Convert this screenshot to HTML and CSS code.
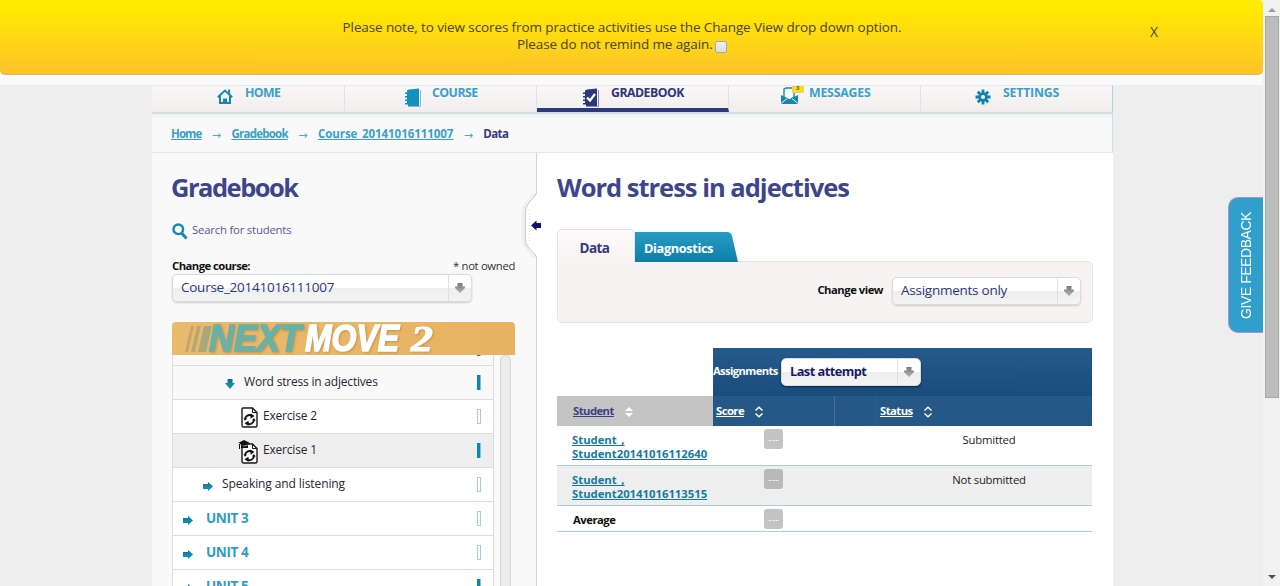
FILE: index.html
```html
<!DOCTYPE html>
<html lang="en">
<head>
<meta charset="utf-8">
<title>Gradebook</title>
<link rel="stylesheet" href="styles.css">
</head>
<body>
<svg class="defs" width="0" height="0">
  <defs>
    <linearGradient id="teal" x1="0" y1="0" x2="0" y2="1"><stop offset="0" stop-color="#116c8c"/><stop offset=".5" stop-color="#1289b4"/><stop offset="1" stop-color="#1492c0"/></linearGradient>
    <linearGradient id="grey" x1="0" y1="0" x2="0" y2="1"><stop offset="0" stop-color="#777"/><stop offset="1" stop-color="#b4b4b4"/></linearGradient>
    <symbol id="right" viewBox="0 0 10 9"><path fill="url(#teal)" d="M0 2h5V0l5 4.500L5 9V7H0z"/></symbol>
    <symbol id="down" viewBox="0 0 10 10"><path fill="url(#teal)" d="M2.500 0h5v4H10L5 10 0 4h2.500z"/></symbol>
    <symbol id="drop" viewBox="0 0 10 10"><path fill="url(#grey)" d="M2.500 0h5v3.500H10v1.500L5 10 0 5V3.500h2.500z"/></symbol>
    <symbol id="sheet" viewBox="0 0 17 21">
      <path d="M2 1h9.500l4.500 4.500V18.500a1.500 1.500 0 0 1-1.500 1.500H2.500A1.500 1.500 0 0 1 1 18.500V2a1 1 0 0 1 1-1z" fill="#fff" stroke="#1a1a1a" stroke-width="1.400"/>
      <path d="M11.500 1v4.500H16" fill="none" stroke="#1a1a1a"/>
      <path d="M4 12A4.500 4.500 0 0 1 10.500 8.600M13 12.800A4.500 4.500 0 0 1 6.500 16.700" fill="none" stroke="#111" stroke-width="1.900"/>
      <path d="M9.500 6.500l4 2.500-4 2.700zM7.500 13.700l-4 2.500 4 2.700zM2.300 11.500h3.800l-2 2.300zM10.900 13.500h3.900l-2-2.500z" fill="#111"/>
    </symbol>
    <symbol id="sort" viewBox="0 0 10 12"><path d="M1.500 4.500L5 1.200l3.500 3.300M1.500 7.500L5 10.800l3.500-3.300" fill="none" stroke="#fff" stroke-width="1.500"/></symbol>
  </defs>
</svg>
<div class="window">
  <div class="page">
    <div class="notice">
      <div class="notice-text">Please note, to view scores from practice activities use the Change View drop down option.<br>Please do not remind me again. <span class="check"></span></div>
      <div class="close">X</div>
    </div>
    <div class="container">
      <nav class="nav">
        <a class="tab home"><svg width="16" height="15" viewBox="0 0 16 15"><path d="M.8 8.200L8 1.500l7.200 6.700M3 7v7h10V7" fill="none" stroke="#1689b3" stroke-width="2"/><path d="M6 14v-4.500h4V14zM11.200.5h1.900v5l-1.900-1.500z" fill="#1689b3"/></svg><span>HOME</span></a>
        <a class="tab course"><svg width="17" height="19" viewBox="0 0 17 19"><path d="M2 2.500l2-1 10-1V18H3V16.500H0V15h2v-2H0v-1.500h2v-2H0V8h2V6H0V4.500h2z" fill="#1490bd"/><path d="M15.500 2v16.500H3" fill="none" stroke="#7dbdd5"/></svg><span>COURSE</span></a>
        <a class="tab grade"><svg width="17" height="19" viewBox="0 0 17 19"><path d="M2 2.500l2-1 10-1V18H3V16.500H0V15h2v-2H0v-1.500h2v-2H0V8h2V6H0V4.500h2z" fill="#2b3879"/><path d="M15.500 2v16.500H3" fill="none" stroke="#878db5"/><path d="M4 9.500l3 3L12 6" fill="none" stroke="#fff" stroke-width="2.200"/></svg><span>GRADEBOOK</span></a>
        <a class="tab messages"><svg width="24" height="18" viewBox="0 0 24 18"><path d="M0 9l8.500 4L17 9v9H0z" fill="#1689b3"/><path d="M3 11V3l2-1h8v9l-4.500 3z" fill="#fff" stroke="#1689b3" stroke-width="1.400"/><path d="M0 17.500l6-5M17 17.500l-6-5" stroke="#e8f4f8" fill="none"/><path d="M11.500 -1h11v7.500h-11z" fill="#ffde00" stroke="#d3cfae"/><text x="15" y="4" class="count">3</text></svg><span>MESSAGES</span></a>
        <a class="tab settings"><svg width="16" height="16" viewBox="-8 -8 16 16"><g stroke="#1283ad" stroke-width="2.800"><path d="M0-7.500v15M-7.500 0h15M-5.200-5.200L5.200 5.200M5.200-5.200L-5.200 5.200"/></g><circle r="4.800" fill="#1283ad"/><circle r="2" fill="#fff"/></svg><span>SETTINGS</span></a>
      </nav>
      <div class="crumbs"><a class="c-home">Home</a><i>→</i><a class="c-grade">Gradebook</a><i>→</i><a>Course_20141016111007</a><i>→</i><b>Data</b></div>
      <div class="columns">
        <aside class="side">
          <h1>Gradebook</h1>
          <div class="search"><svg width="16" height="17" viewBox="0 0 16 17"><circle cx="6.300" cy="6.300" r="4.800" fill="none" stroke="#1689b3" stroke-width="2.400"/><path d="M9.500 10l5 5.500" stroke="#1689b3" stroke-width="3"/></svg><span>Search for students</span></div>
          <div class="label-row"><b>Change course:</b><span>* not owned</span></div>
          <div class="select course-select"><span>Course_20141016111007</span><em><svg width="10" height="10"><use href="#drop"/></svg></em></div>
          <div class="book">
            <svg width="343" height="33" viewBox="0 0 343 33">
              <g opacity=".6"><path d="M19 4h3l-6 26h-3z" fill="#a79a78"/><path d="M25 4h4l-6 26h-4z" fill="#9a9b80"/><path d="M32 4h8l-6 26h-8z" fill="#7b9e8c"/></g>
              <g class="logo-shadow">
                <text class="logo-word next" x="37" y="29" textLength="92" lengthAdjust="spacingAndGlyphs">NEXT</text>
                <text class="logo-word move" x="133" y="29" textLength="94" lengthAdjust="spacingAndGlyphs">MOVE</text>
                <text class="logo-two" x="239" y="29" textLength="22" lengthAdjust="spacingAndGlyphs">2</text>
              </g>
            </svg>
          </div>
          <div class="tree-wrap">
            <div class="tree">
              <div class="row first"><u class="bar full"></u></div>
              <div class="row lvl2 open"><svg width="10" height="10"><use href="#down"/></svg><span>Word stress in adjectives</span><u class="bar full"></u></div>
              <div class="row lvl3"><svg width="17" height="21"><use href="#sheet"/></svg><span>Exercise 2</span><u class="bar"></u></div>
              <div class="row lvl3 current"><svg class="cap" width="20" height="24" viewBox="0 0 20 24"><use href="#sheet" x="3" y="3" width="17" height="21"/><path d="M0 3l6-3 6 3-6 3zM3 5l3 1.500L10 5v3H3zM1 3v6h1V3z" fill="#111"/></svg><span>Exercise 1</span><u class="bar full"></u></div>
              <div class="row lvl1"><svg width="10" height="9"><use href="#right"/></svg><span>Speaking and listening</span><u class="bar"></u></div>
              <div class="row unit"><svg width="10" height="9"><use href="#right"/></svg><span>UNIT 3</span><u class="bar"></u></div>
              <div class="row unit"><svg width="10" height="9"><use href="#right"/></svg><span>UNIT 4</span><u class="bar"></u></div>
              <div class="row unit"><svg width="10" height="9"><use href="#right"/></svg><span>UNIT 5</span><u class="bar full"></u></div>
            </div>
            <div class="tree-scroll"></div>
          </div>
        </aside>
        <main class="main">
          <svg class="handle" width="26" height="80" viewBox="0 0 26 80">
            <path d="M14 9L6.500 19Q3.500 22 3.500 27V54Q3.500 58 6.500 62L14 72" fill="none" stroke="#f0f0f0" stroke-width="6"/>
            <path d="M16 7C15.500 12 5 19 5 27V55C5 62 15.500 68 16 73z" fill="#fff"/>
            <path d="M15.500 7C15.500 12 4.500 17 4.500 27V55C4.500 64 15.500 68 15.500 73" fill="none" stroke="#ccc"/>
            <path d="M8.500 25v33" stroke="#ddd" stroke-dasharray="1 2"/>
            <path d="M10 40.500l5.500-5v2.500H20v5h-4.500v2.500z" fill="#10116c"/>
          </svg>
          <h2>Word stress in adjectives</h2>
          <div class="tabs">
            <div class="tab-data">Data</div>
            <div class="tab-diag">Diagnostics</div>
          </div>
          <div class="view-panel"><b>Change view</b><div class="select view-select"><span>Assignments only</span><em><svg width="10" height="10"><use href="#drop"/></svg></em></div></div>
          <div class="grid">
            <div class="assign"><b>Assignments</b><div class="select attempt"><span>Last attempt</span><em><svg width="10" height="10"><use href="#drop"/></svg></em></div></div>
            <div class="head">
              <div class="h-student"><a>Student</a><svg width="10" height="12" viewBox="0 0 10 12"><path d="M1 5l4-4 4 4zM1 7l4 4 4-4z" fill="#fff"/></svg></div>
              <div class="h-score"><a>Score</a><svg width="10" height="12"><use href="#sort"/></svg></div>
              <div class="h-blank"></div>
              <div class="h-status"><a>Status</a><svg width="10" height="12"><use href="#sort"/></svg></div>
            </div>
            <div class="line"><a>Student_,<br>Student20141016112640</a><div class="score"><span>---</span></div><div class="status">Submitted</div></div>
            <div class="line alt"><a>Student_,<br>Student20141016113515</a><div class="score"><span>---</span></div><div class="status">Not submitted</div></div>
            <div class="line avg"><b>Average</b><div class="score"><span>---</span></div><div class="status"></div></div>
          </div>
        </main>
      </div>
    </div>
    <div class="feedback"><span>GIVE FEEDBACK</span></div>
  </div>
  <div class="scrollbar"><svg class="up" width="8" height="4"><path d="M0 4l4-4 4 4z" fill="#999"/></svg><div class="thumb"></div><svg class="dn" width="8" height="4"><path d="M0 0l4 4 4-4z" fill="#505050"/></svg></div>
</div>
</body>
</html>
```
FILE: styles.css
```css
* { box-sizing: border-box; }
body { margin: 0; height: 586px; overflow: hidden; background: #eee; font: 12px "Open Sans", "Noto Sans", sans-serif; color: #222; }
a { text-decoration-skip-ink: none; }
b { font-weight: 700; }
svg { display: block; flex: none; }
.defs { position: absolute; }
.window { display: flex; height: 586px; overflow: hidden; }
.page { width: 1263px; position: relative; overflow: hidden; background: linear-gradient(#fafafa 85px, #eee 85px); }

.notice { height: 75px; border-radius: 0 4px 5px 5px; border-bottom: 1px solid #cdbb72; background: linear-gradient(#ffec00, #ffea00 10%, #fcc32a); padding-top: 19px; display: flex; color: #4b4420; }
.notice-text { width: 1244px; text-align: center; font-size: 13.5px; line-height: 17px; letter-spacing: -0.11px; flex: none; }
.check { display: inline-block; width: 12px; height: 12px; border: 1px solid #a9a9a9; border-radius: 2px; background: linear-gradient(#eee, #ddd); vertical-align: -4px; margin-left: -1px; }
.close { position: absolute; left: 1150px; top: 23px; font-size: 14px; line-height: 18px; }

.container { width: 961px; margin: 10px 0 0 152px; background: #fff; height: 501px; }
.nav { display: flex; height: 29px; border-top: 1px solid #e9e9e9; border-bottom: 2px solid #d5dfe2; border-right: 1px solid #a9d4e2; background: linear-gradient(#faf7f8, #f1edec); }
.tab { width: 192px; flex: none; display: flex; border-right: 1px solid #dde3e6; padding-left: 65px; color: #3a9fcb; font-size: 12.3px; font-weight: 700; line-height: 14px; letter-spacing: -0.5px; }
.tab svg { margin-top: 3px; }
.tab span { margin-left: 12px; }
.tab.home { width: 193px; letter-spacing: -0.6px; }
.tab.course { padding-left: 60px; }
.tab.course svg { margin-top: 2px; }
.tab.course span { margin-left: 10px; }
.tab.grade { padding-left: 46px; color: #2b3879; border-bottom: 4px solid #2b3879; }
.tab.grade svg { margin-top: 2px; }
.tab.grade span { margin-left: 11px; }
.tab.messages { padding-left: 52px; letter-spacing: -0.2px; }
.tab.messages svg { margin-top: 0; }
.tab.messages span { margin-left: 4px; }
.count { font: bold 6px "Liberation Sans", sans-serif; fill: #555; }
.tab.settings { padding-left: 54px; width: 191px; border: 0; letter-spacing: -0.2px; }

.crumbs { height: 39px; background: linear-gradient(#eff0f0, #f9f9f9 5px); border-bottom: 1px solid #e5e7e9; border-right: 1px solid #c5e2eb; padding-left: 19px; display: flex; font-size: 11.5px; line-height: 40px; }
.crumbs a { color: #3a9fcb; text-decoration: underline; font-weight: 700; letter-spacing: -0.05px; }
.crumbs .c-home { letter-spacing: -0.9px; }
.crumbs .c-grade { letter-spacing: -0.75px; }
.crumbs b { color: #343b86; letter-spacing: -0.6px; }
.crumbs i { font: 11px "DejaVu Sans", sans-serif; line-height: 43px; color: #4da7cd; width: 30px; text-align: center; }

.columns { display: flex; height: 433px; }
.side { width: 385px; background: #f9f9f9; border-right: 1px solid #d5d5d5; padding-left: 20px; }
h1, h2 { margin: 0; font-size: 25.5px; font-weight: 700; line-height: 36px; color: #3d468c; letter-spacing: -1px; }
h1 { margin: 16px 0 0 -1px; letter-spacing: -1.5px; }
.search { display: flex; margin-top: 17px; font-size: 11.3px; line-height: 15px; letter-spacing: -0.18px; color: #5b57a0; }
.search svg { margin: 1px 4px -1px 0; }
.label-row { display: flex; justify-content: space-between; width: 343px; margin-top: 19px; line-height: 16px; height: 16px; font-size: 11.3px; letter-spacing: -0.33px; color: #333; }
.label-row b { color: #111; letter-spacing: -0.55px; }
.select { display: flex; height: 28px; border: 1px solid #dcdcdc; border-radius: 5px; background: linear-gradient(#fff 48%, #eee 52%, #f4f4f4); box-shadow: 0 1px 2px #ccc; font-size: 13.5px; line-height: 25px; letter-spacing: -0.25px; color: #2d3579; padding-left: 8px; justify-content: space-between; }
.select em { width: 23px; border-left: 1px solid #e0e0e0; padding: 8px 0 0 6px; }
.course-select { width: 300px; }

.book { width: 343px; height: 33px; margin-top: 20px; background: linear-gradient(90deg, #eaba6c, #e6b362); border-radius: 4px 4px 0 0; }
.book svg { overflow: visible; }
.logo-word { font: italic bold 36px "Liberation Sans", sans-serif; }
.next { fill: #69b1a7; stroke: #69b1a7; stroke-width: 1.5px; }
.move { fill: #fff; stroke: #fff; stroke-width: 1.5px; }
.logo-two { font: italic bold 36px "Liberation Serif", serif; fill: #fff; stroke: #fff; }
.logo-shadow { filter: drop-shadow(1px 1px 1px #c8924c); }
.tree-wrap { display: flex; height: 231px; overflow: hidden; }
.tree { width: 322px; }
.row { height: 34px; border: 1px solid #ddd; border-top: 0; background: #fff; display: flex; align-items: center; font-size: 12px; letter-spacing: -0.2px; color: #252535; line-height: 31px; padding-right: 12px; }
.row span { margin-top: -3px; }
.row.first { height: 11px; background: #f9f9f9; align-items: flex-start; }
.row.first .bar { height: 1px; margin-top: 0; }
.bar { width: 4px; height: 15px; border: 1px solid #a5cfdd; background: #fff; margin: 0 0 0 auto; flex: none; }
.bar.full { background: #0d86b0; border-color: #80c5da; border-top: 0; border-bottom: 0; border-left-width: 0; }
.open { background: #f9f9f9; padding-left: 52px; }
.open svg { margin: 3px 9px 0 0; }
.lvl3 { padding-left: 68px; }
.lvl3 svg { margin: 1px 5px 0 0; }
.lvl3 .cap { margin: 2px 5px 0 -3px; }
.current { background: #eee; }
.lvl1 { padding-left: 30px; letter-spacing: -0.1px; }
.lvl1 svg { margin: 4px 9px 0 0; }
.unit { padding-left: 10px; font-size: 13.5px; font-weight: 700; color: #2f9bc8; letter-spacing: -0.4px; }
.unit svg { margin: 3px 13px 0 0; }
.unit span { margin-top: -1px; }
.tree-scroll { width: 11px; height: 260px; margin-left: 6px; border: 1px solid #d5d5d5; border-radius: 5px; background: #ececec; }

.main { width: 576px; padding-left: 20px; position: relative; }
.handle { position: absolute; left: -16px; top: 32px; }
h2 { margin-top: 16px; }
.tabs { display: flex; height: 33px; margin-top: 24px; align-items: flex-end; position: relative; }
.tab-data { width: 78px; height: 33px; border: 1px solid #e3e3e3; border-bottom: 0; border-radius: 5px 5px 0 0; background: linear-gradient(#fdfafb, #f8f3f3); text-align: center; line-height: 37px; padding-right: 3px; font-size: 13.5px; font-weight: 700; letter-spacing: -0.6px; color: #353a80; }
.tab-diag { width: 103px; height: 30px; clip-path: path("M0 0H92Q96 0 97 4L103 30H0z"); background: linear-gradient(#289cc5, #0e7ea7); color: #fff; font-size: 12.8px; font-weight: 700; line-height: 32px; letter-spacing: -0.4px; padding-left: 9px; }
.view-panel { width: 536px; height: 62px; margin-top: -1px; border: 1px solid #e5e5e5; border-radius: 0 5px 5px 5px; background: #f8f3f3; display: flex; justify-content: flex-end; padding: 15px 11px 0 0; font-size: 11.3px; color: #111; }
.view-panel b { line-height: 25px; margin-right: 9px; letter-spacing: -0.5px; }
.view-select { width: 189px; }

.grid { width: 535px; margin-top: 25px; font-size: 11.3px; }
.assign { margin-left: 156px; height: 48px; display: flex; padding-top: 10px; background: linear-gradient(#265a89, #1a4c7e); color: #fff; }
.assign b { width: 68px; line-height: 26px; white-space: nowrap; font-size: 11.2px; letter-spacing: -0.6px; }
.attempt { width: 140px; font-weight: 700; font-size: 12.8px; letter-spacing: -0.55px; color: #191b68; box-shadow: 0 1px 2px #123; }
.head { display: flex; height: 30px; background: #255887; color: #fff; font-weight: 700; line-height: 30px; letter-spacing: -0.55px; }
.head a { text-decoration: underline; }
.head div { display: flex; flex: none; }
.head svg { margin: 10px 0 0 10px; }
.h-student { width: 156px; background: #c4c4c4; padding-left: 16px; color: #3c3f82; }
.h-score { width: 122px; padding-left: 3px; border-right: 1px solid #42709a; }
.h-blank { width: 42px; border-right: 1px solid #315f8d; }
.h-status { padding-left: 3px; }
.line { display: flex; height: 40px; border-bottom: 1px solid #abccd9; }
.line.alt { background: #eee; }
.line.avg { height: 26px; }
.line a, .line b { width: 207px; padding: 7px 0 0 15px; line-height: 14px; color: #147ba0; text-decoration: underline; font-weight: 700; letter-spacing: 0; }
.line b { text-decoration: none; color: #111; padding-left: 16px; letter-spacing: -0.5px; }
.score { width: 122px; padding-top: 3px; }
.score span { display: block; width: 19px; height: 20px; border-radius: 3px; background: #c3c3c3; color: #f4f4f4; text-align: center; line-height: 20px; }
.alt .score span { background: #b9b9b9; }
.status { width: 206px; text-align: center; font-size: 11.3px; line-height: 27px; letter-spacing: -0.2px; }

.feedback { position: absolute; left: 1228px; top: 197px; width: 35px; height: 136px; border: 1px solid #9a9bd0; border-right: 0; border-radius: 10px 0 0 10px; background: #309fcc; color: #fff; display: flex; align-items: center; justify-content: center; }
.feedback span { writing-mode: vertical-rl; transform: rotate(180deg); font: 14px "Liberation Sans", sans-serif; white-space: nowrap; letter-spacing: -0.45px; }
.scrollbar { width: 17px; background: #f1f1f1; display: flex; flex-direction: column; align-items: center; }
.up { margin-top: 8px; }
.thumb { width: 14px; height: 382px; margin-top: 4px; background: #bcbcbc; border: 1px solid #a9a9a9; margin-left: 1px; }
.dn { margin-top: 177px; }
```
